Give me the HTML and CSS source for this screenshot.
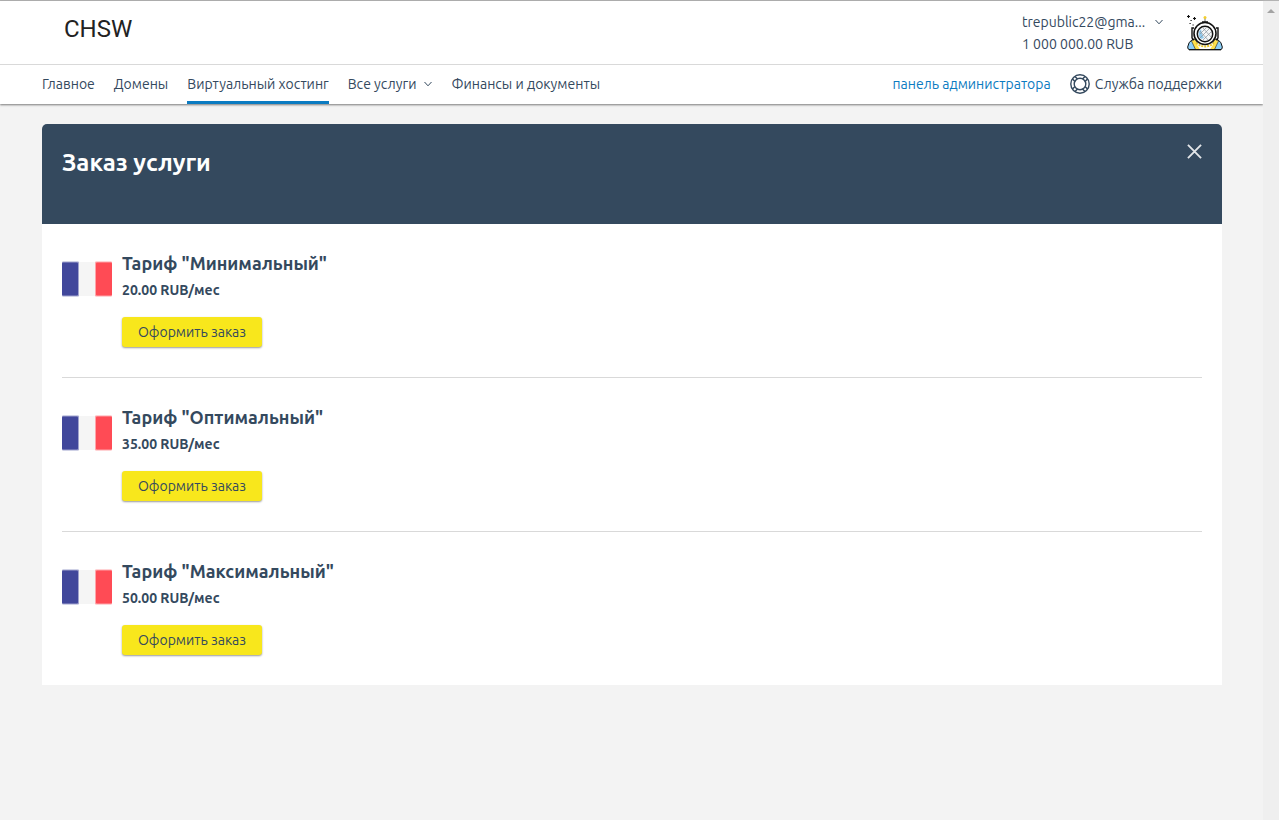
FILE: index.html
```html
<!DOCTYPE html>
<html lang="ru">
<head>
<meta charset="utf-8">
<title>Заказ услуги</title>
<link rel="stylesheet" href="styles.css">
</head>
<body>
<svg class="defs" width="0" height="0" aria-hidden="true">
  <symbol id="flag" viewBox="0 0 50 36">
    <rect x="0" y="0" width="50" height="36" fill="#fff"/>
    <rect x="0" y="0.500" width="17" height="35" rx="1" fill="#41479b" opacity=".5"/>
    <rect x="0" y="1.500" width="16" height="33" rx="1" fill="#41479b"/>
    <rect x="17" y="1" width="16" height="34" fill="#f5f5f5"/>
    <rect x="33" y="0.500" width="17" height="35" rx="1" fill="#ff4b55" opacity=".5"/>
    <rect x="34" y="1.500" width="16" height="33" rx="1" fill="#ff4b55"/>
  </symbol>
  <symbol id="chevron" viewBox="0 0 8 6">
    <path d="M0.5 1 4 4.8 7.5 1" fill="none" stroke="currentColor"/>
  </symbol>
</svg>
<div class="window">
  <div class="page">
    <header class="header">
      <div class="top">
        <a class="logo" href="#">CHSW</a>
        <div class="account">
          <div class="user">
            <button class="email" type="button">trepublic22@gma... <svg class="chevron"><use href="#chevron"/></svg></button>
            <span class="balance">1 000 000.00 RUB</span>
          </div>
          <svg class="avatar" viewBox="0 0 36 36" aria-hidden="true">
            <path d="M6 24q-5 3-5.300 8 0 2.500 1.500 2.500H9zM30 24q5 3 5.300 8 0 2.500-1.500 2.500H27z" fill="#8fd0f7" stroke="#111"/>
            <path d="M4.500 26 8 24l6 10.500H8.500zM31.500 26 28 24l-6 10.500h5.500z" fill="#ffe14d" stroke="#222" stroke-width=".6"/>
            <path d="M9 28h18l-4 6.500H13z" fill="#fff"/>
            <path d="M2 34.700h32" stroke="#111" stroke-width="1.300"/>
            <path d="M9 28q9 7 18 0" fill="none" stroke="#e8c62e" stroke-width="2" stroke-dasharray="2 1"/>
            <path d="M7 13H5v10l2 2M29 13h2v10l-2 2" fill="none" stroke="#111" stroke-width="1.400"/>
            <circle cx="18" cy="18.500" r="11" fill="#fff" stroke="#111" stroke-width="1.600"/>
            <circle cx="18" cy="19" r="7.700" fill="#f4f6f8" stroke="#111" stroke-width="1.500"/>
            <path d="M14 14a6.500 6.500 0 0 0 0 10l3-1-2-4z" fill="#8fc9ee"/>
            <path d="M13 19l6-6M13 23l9-9M16 25l8-8M13 16l8 9M16 13l8 9" stroke="#8a929b" stroke-width=".7"/>
            <path d="M18 2v5" stroke="#888" stroke-width="1.200"/>
            <circle cx="18" cy="2.500" r="1.500" fill="#f3cf2f"/>
            <path d="M15 7h6" stroke="#111" stroke-width="1.500"/>
            <path d="M0 1.500h3M1.500 0v3M6 3.500h3M7.500 2v3M3.500 5.500h1.200M2.500 8.500h1.200M5.500 10h1.200" stroke="#111" stroke-width="1.100"/>
          </svg>
        </div>
      </div>
      <nav class="nav">
        <a class="tab" href="#">Главное</a>
        <a class="tab" href="#">Домены</a>
        <a class="tab active" href="#" aria-current="page">Виртуальный хостинг</a>
        <button class="tab" type="button">Все услуги <svg class="chevron"><use href="#chevron"/></svg></button>
        <a class="tab" href="#">Финансы и документы</a>
        <a class="tab admin" href="#">панель администратора</a>
        <a class="tab support" href="#">
          <svg class="buoy" viewBox="0 0 20 20" fill="none" stroke="currentColor" aria-hidden="true">
            <circle cx="10" cy="10" r="9.200" stroke-width="1.400"/>
            <circle cx="10" cy="10" r="5.800" stroke-width="1.400"/>
            <path d="M5 2.500 7.500 5M2.500 5 5 7.500M15 2.500 12.500 5M17.500 5 15 7.500M5 17.500 7.500 15M2.500 15 5 12.500M15 17.500 12.500 15M17.500 15 15 12.500" stroke-width="1.500"/>
          </svg>
          Служба поддержки
        </a>
      </nav>
    </header>
    <main class="order">
      <div class="title-bar">
        <h1 class="title">Заказ услуги</h1>
        <button class="close" type="button" aria-label="Закрыть">
          <svg viewBox="0 0 16 16"><path d="M1 1l14 14M15 1L1 15" stroke="currentColor" stroke-width="2"/></svg>
        </button>
      </div>
      <div class="plans">
        <section class="plan">
          <svg class="flag"><use href="#flag"/></svg>
          <div class="details">
            <h2 class="name">Тариф "Минимальный"</h2>
            <p class="price">20.00 RUB/мес</p>
            <button class="buy" type="button">Оформить заказ</button>
          </div>
        </section>
        <section class="plan">
          <svg class="flag"><use href="#flag"/></svg>
          <div class="details">
            <h2 class="name">Тариф "Оптимальный"</h2>
            <p class="price">35.00 RUB/мес</p>
            <button class="buy" type="button">Оформить заказ</button>
          </div>
        </section>
        <section class="plan">
          <svg class="flag"><use href="#flag"/></svg>
          <div class="details">
            <h2 class="name">Тариф "Максимальный"</h2>
            <p class="price">50.00 RUB/мес</p>
            <button class="buy" type="button">Оформить заказ</button>
          </div>
        </section>
      </div>
    </main>
  </div>
  <div class="scrollbar" aria-hidden="true"><span class="arrow"></span></div>
</div>
</body>
</html>
```
FILE: styles.css
```css
* { box-sizing: border-box; }
body {
  margin: 0;
  background: #f3f3f3;
  color: #34495e;
  font: 14px/22px Ubuntu, "Noto Sans", "Open Sans", sans-serif;
}
a { color: inherit; text-decoration: none; }
button { border: 0; padding: 0; background: none; color: inherit; font: inherit; cursor: pointer; }
h1, h2, p { margin: 0; }
.defs { position: absolute; }
.window {
  display: grid;
  grid-template-columns: minmax(0, 1fr) 16px;
  min-height: 100vh;
  border-top: 1px solid #b3b3b3;
}
.scrollbar { background: #efefef; display: flex; justify-content: center; align-items: flex-start; padding-top: 8px; }
.arrow { border: 4px solid transparent; border-top: 0; border-bottom-color: #a3a3a3; }
.header { background: #fff; box-shadow: 0 1px 2px rgba(0, 0, 0, .5); }
.top {
  display: flex;
  justify-content: space-between;
  height: 64px;
  padding: 10px 40px 0 64px;
  border-bottom: 1px solid #d9d9d9;
}
.logo { color: #222; font: 24px/36px Roboto, sans-serif; }
.account { display: flex; gap: 24px; }
.user { display: flex; flex-direction: column; min-width: 141px; }
.email { display: flex; align-items: center; justify-content: space-between; gap: 5px; }
.chevron { width: 8px; height: 6px; }
.avatar { width: 36px; height: 36px; margin-top: 4px; }
.nav { display: flex; gap: 19px; padding: 0 41px 0 42px; height: 39px; }
.tab { display: flex; align-items: center; padding-top: 2px; border-bottom: 3px solid transparent; white-space: nowrap; }
button.tab { gap: 8px; }
.active { border-color: #0b7bc1; }
.admin { margin-left: auto; color: #0b7bc1; }
.support { gap: 5px; }
.buoy { width: 20px; height: 20px; }
.order { margin: 20px 41px 20px 42px; background: #fff; border-radius: 5px 5px 0 0; }
.title-bar {
  display: flex;
  justify-content: space-between;
  align-items: flex-start;
  min-height: 100px;
  padding: 20px;
  background: #34495e;
  border-radius: 5px 5px 0 0;
  color: #fff;
}
.title { font-size: 24px; line-height: 38px; }
.close { display: flex; color: #e3e6e9; }
.close svg { width: 15px; height: 15px; }
.plans { padding: 0 20px; }
.plan { display: flex; gap: 10px; padding: 28px 0 29px; }
.plan + .plan { border-top: 1px solid #d9d9d9; }
.flag { width: 50px; height: 36px; margin-top: 9px; }
.name { font-size: 18px; line-height: 22px; }
.price { font-weight: 700; line-height: 32px; }
.buy {
  height: 30px;
  margin-top: 11px;
  margin-bottom: 1px;
  padding: 0 16px;
  border-radius: 3px;
  background: #f8e71c;
  box-shadow: 0 1px 2px rgba(0, 0, 0, .4);
}
```
